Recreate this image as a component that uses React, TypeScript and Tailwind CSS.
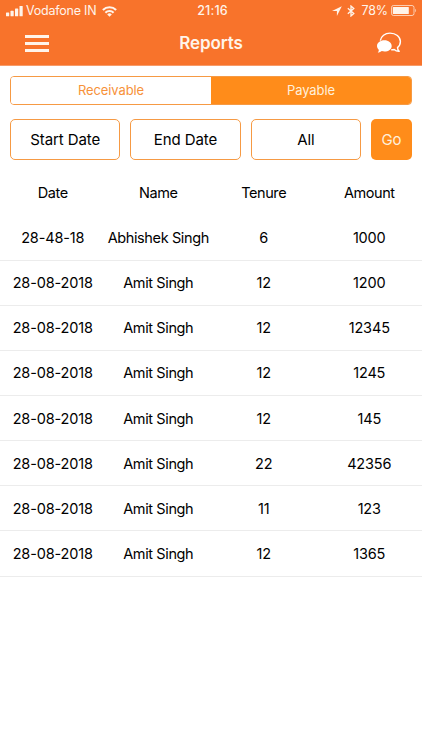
import { useState } from 'react';

const rows = [
  { date: '28-48-18', name: 'Abhishek Singh', tenure: 6, amount: 1000 },
  { date: '28-08-2018', name: 'Amit Singh', tenure: 12, amount: 1200 },
  { date: '28-08-2018', name: 'Amit Singh', tenure: 12, amount: 12345 },
  { date: '28-08-2018', name: 'Amit Singh', tenure: 12, amount: 1245 },
  { date: '28-08-2018', name: 'Amit Singh', tenure: 12, amount: 145 },
  { date: '28-08-2018', name: 'Amit Singh', tenure: 22, amount: 42356 },
  { date: '28-08-2018', name: 'Amit Singh', tenure: 11, amount: 123 },
  { date: '28-08-2018', name: 'Amit Singh', tenure: 12, amount: 1365 },
];

function SignalIcon() {
  return (
    <svg width="17" height="11" viewBox="0 0 17 11" fill="currentColor">
      <rect x="0" y="6.5" width="3.2" height="3.8" rx="0.6" />
      <rect x="4.5" y="4.8" width="3.2" height="5.5" rx="0.6" />
      <rect x="9" y="2.6" width="3.2" height="7.7" rx="0.6" />
      <rect x="13.5" y="0" width="3.2" height="10.3" rx="0.6" />
    </svg>
  );
}

function WifiIcon() {
  return (
    <svg width="15" height="11" viewBox="0 0 15 11" fill="none" stroke="currentColor" strokeWidth="2.1">
      <path d="M0.9 4a9.3 9.3 0 0 1 13.200 0" />
      <path d="M3.400 6.700a5.800 5.800 0 0 1 8.200 0" />
      <path d="M7.500 10.700L5.200 8.400a3.200 3.200 0 0 1 4.600 0z" fill="currentColor" stroke="none" />
    </svg>
  );
}

function StatusBar() {
  return (
    <div className="grid h-[22px] grid-cols-[1fr_auto_1fr] items-center px-[5px] text-[12.5px] leading-none">
      <div className="ml-px flex items-center">
        <SignalIcon />
        <span className="ml-[3px] mr-[6px] tracking-[-0.22px]">Vodafone IN</span>
        <WifiIcon />
      </div>
      <span className="pl-[3px] font-medium tracking-[0.2px]">21:16</span>
      <div className="flex items-center justify-end">
        <svg width="10" height="10" viewBox="0 0 10 10" fill="currentColor">
          <path d="M9.8 0.2L0 5h4.900v4.900z" />
        </svg>
        <svg className="ml-[5px] mr-[6px]" width="8" height="12" viewBox="0 0 8 12" fill="none" stroke="currentColor" strokeWidth="1.3">
          <path d="M0.8 3.3l6 5.3L4 11V1l2.8 2.4-6 5.3" />
        </svg>
        <span className="tracking-[-0.1px]">78%</span>
        <svg className="-mt-px ml-[3px]" width="26" height="11" viewBox="0 0 26 11" fill="none">
          <rect x="0.5" y="0.5" width="22.500" height="10" rx="2" stroke="currentColor" strokeOpacity="0.7" />
          <rect x="1.800" y="2" width="16" height="7" rx="0.6" fill="currentColor" />
          <path d="M24.200 3.800c1.2 0.4 1.2 3 0 3.4z" fill="currentColor" fillOpacity="0.7" />
        </svg>
      </div>
    </div>
  );
}

function ChatIcon() {
  return (
    <svg width="26" height="22" viewBox="0 0 26 22">
      <path
        d="M4.3 8.6C5 4.2 9 1.1 14 1.1c5.800 0 10.400 3.700 10.400 8.400 0 2.600-1.100 4.600-2.900 6.100 0 1.700.7 2.900 1.700 3.700-2 .1-3.800-.6-5-1.800-1 .2-2 .3-3 .2"
        fill="none"
        stroke="currentColor"
        strokeWidth="1.4"
        strokeLinejoin="round"
      />
      <path
        d="M8.400 8.200c4.100 0 7.300 2.500 7.300 5.700s-3.200 5.600-7.300 5.600c-.9 0-1.800-.1-2.600-.4-1 .9-2.400 1.500-4.100 1.500.8-.8 1.200-1.800 1.100-2.900C1.700 16.700 1 15.400 1 13.900c0-3.200 3.300-5.700 7.400-5.700z"
        fill="currentColor"
      />
    </svg>
  );
}

function Header() {
  return (
    <header className="h-[66px] border-b border-[#f79b69] bg-[#f8732b] text-[#fff4ea]">
      <StatusBar />
      <div className="grid h-[42px] grid-cols-[1fr_auto_1fr] items-center px-5">
        <button className="ml-[5px] flex w-[24px] flex-col gap-[4px]" aria-label="Menu">
          <span className="h-[3px] w-full bg-current" />
          <span className="h-[3px] w-full bg-current" />
          <span className="h-[3px] w-full bg-current" />
        </button>
        <h1 className="text-[17px] font-semibold leading-none tracking-[-0.1px]">Reports</h1>
        <button className="justify-self-end text-white" aria-label="Chat">
          <ChatIcon />
        </button>
      </div>
    </header>
  );
}

export default function App() {
  const [tab, setTab] = useState('Payable');

  return (
    <div className="h-[750px] w-[422px] overflow-hidden bg-white font-['Inter',sans-serif] text-black">
      <Header />

      {/* Tabs */}
      <div className="mx-[10px] mt-[10px] flex h-[29px] overflow-hidden rounded-[4px] border border-[#f69a44]">
        {['Receivable', 'Payable'].map((label) => (
          <button
            key={label}
            onClick={() => setTab(label)}
            className={`flex-1 text-[13px] leading-none tracking-[-0.1px] ${
              tab === label ? 'bg-[#ff8c1a] text-[#fff0dc]' : 'bg-white text-[#f7923a]'
            }`}
          >
            {label}
          </button>
        ))}
      </div>

      {/* Filters */}
      <div className="mx-[10px] mt-[14px] flex h-[41px] gap-[10px] text-[15px] leading-none tracking-[-0.1px]">
        {['Start Date', 'End Date', 'All'].map((label) => (
          <button key={label} className="flex-1 rounded-[5px] border border-[#f69a44]">
            {label}
          </button>
        ))}
        <button className="w-[41px] rounded-[5px] bg-[#ff8c1a] text-[#fff0dc]">Go</button>
      </div>

      {/* Table */}
      <div className="mt-[10.5px] text-center text-[14.5px] leading-none">
        <div className="grid h-[45px] grid-cols-4 items-center tracking-[-0.45px]">
          <span>Date</span>
          <span>Name</span>
          <span>Tenure</span>
          <span>Amount</span>
        </div>
        {rows.map((row, i) => (
          <div
            key={i}
            className="grid h-[45.13px] grid-cols-4 items-center whitespace-nowrap border-b border-[#ececec] pt-[1.5px] tracking-[-0.15px]"
          >
            <span>{row.date}</span>
            <span className="tracking-[-0.38px]">{row.name}</span>
            <span>{row.tenure}</span>
            <span>{row.amount}</span>
          </div>
        ))}
      </div>
    </div>
  );
}
